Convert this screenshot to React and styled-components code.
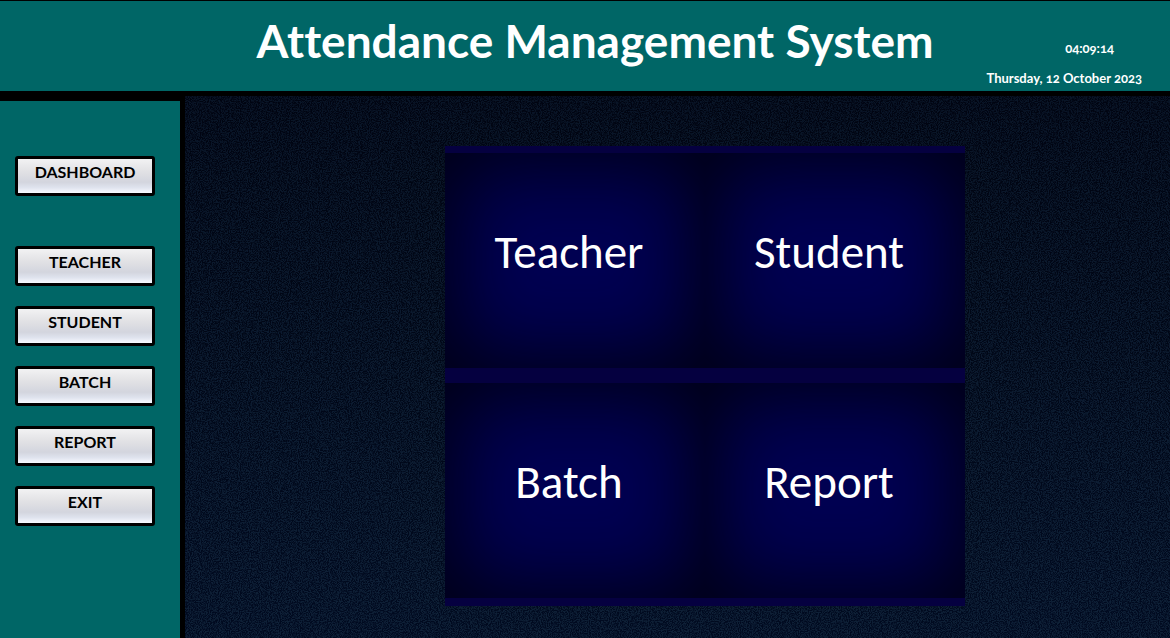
import React from "react";
import styled, { createGlobalStyle } from "styled-components";

const GlobalStyle = createGlobalStyle`
  * { box-sizing: border-box; }
  body {
    margin: 0;
    background: #000;
    font-family: Candara, Lato, "Open Sans", sans-serif;
    font-variant-ligatures: none;
  }
`;

const Page = styled.div`
  min-height: 100vh;
  display: flex;
  flex-direction: column;
`;

const Header = styled.header`
  display: grid;
  grid-template-columns: 1fr auto 1fr;
  min-height: 96px;
  padding: 0 28px 0 48px;
  background: #006666;
  border-top: 1px solid #000;
  border-bottom: 5px solid #000;
  color: #fff;
`;

const Title = styled.h1`
  grid-column: 2;
  margin: 0;
  padding-top: 13px;
  font-size: 46px;
  line-height: 54px;
  font-weight: 700;
  white-space: nowrap;
`;

const Clock = styled.div`
  display: flex;
  flex-direction: column;
  align-items: flex-end;
  gap: 14px;
  padding-top: 39px;
  font-size: 13px;
  line-height: 16px;
  font-weight: 700;
  font-variant-numeric: oldstyle-nums;
  white-space: nowrap;
`;

const Time = styled.time`
  padding-right: ${(p) => (p.$inset ? "28px" : "0")};
`;

const Body = styled.div`
  flex: 1;
  display: flex;
`;

const Sidebar = styled.nav`
  flex: none;
  width: 185px;
  display: flex;
  flex-direction: column;
  gap: 20px;
  padding: 55px 25px 20px 15px;
  background: #006666;
  border-top: 5px solid #000;
  border-right: 5px solid #000;
`;

const NavButton = styled.button`
  height: 40px;
  margin: 0 0 ${(p) => (p.$spaced ? "30px" : "0")};
  padding: 0 0 8px;
  border: 3px solid #000;
  border-radius: 3px;
  background: linear-gradient(#f2f2f3 0%, #e2e2e5 35%, #d3d5de 68%, #dfe3ee 84%, #f8faff 100%);
  color: #000;
  font-family: inherit;
  font-size: 16px;
  line-height: 20px;
  font-weight: 700;
  cursor: pointer;
`;

const Main = styled.main`
  position: relative;
  flex: 1;
  display: flex;
  justify-content: center;
  align-items: flex-start;
  padding: 50px 0 32px 55px;
  background: linear-gradient(#000411, #000717 50%, #000a20);
`;

const Grain = styled.svg`
  position: absolute;
  inset: 0;
  width: 100%;
  height: 100%;
`;

const Tiles = styled.div`
  position: relative;
  display: grid;
  grid-template-columns: repeat(2, 260px);
`;

const Tile = styled.button`
  height: 230px;
  margin: 0;
  padding: 0 12px 18px 0;
  border: 0 solid #050040;
  border-width: 7px 0 8px;
  background: #000052;
  box-shadow: inset 0 0 80px 12px #000014;
  color: #fff;
  font-family: Calibri, Lato, sans-serif;
  font-size: 47px;
  line-height: 52px;
  cursor: pointer;
`;

const navItems = ["DASHBOARD", "TEACHER", "STUDENT", "BATCH", "REPORT", "EXIT"];
const tiles = ["Teacher", "Student", "Batch", "Report"];

export default function App() {
  return (
    <Page>
      <GlobalStyle />
      <Header>
        <Title>Attendance Management System</Title>
        <Clock>
          <Time $inset>04:09:14</Time>
          <Time dateTime="2023-10-12">Thursday, 12 October 2023</Time>
        </Clock>
      </Header>
      <Body>
        <Sidebar>
          {navItems.map((item, i) => (
            <NavButton key={item} type="button" $spaced={i === 0}>
              {item}
            </NavButton>
          ))}
        </Sidebar>
        <Main>
          <Grain aria-hidden="true">
            <defs>
              <filter id="grain" x="0" y="0" width="100%" height="100%" colorInterpolationFilters="sRGB">
                <feTurbulence type="fractalNoise" baseFrequency="0.9" numOctaves="2" seed="4" />
                <feColorMatrix
                  values="0 0 0 0 0.07
                          0 0 0 0 0.15
                          0 0 0 0 0.24
                          4 0 0 0 -1.5"
                />
              </filter>
              <linearGradient id="fade" x1="0" y1="0" x2="0" y2="1">
                <stop offset="0" stopColor="#fff" stopOpacity="0.5" />
                <stop offset="1" stopColor="#fff" stopOpacity="0.8" />
              </linearGradient>
              <mask id="depth">
                <rect width="100%" height="100%" fill="url(#fade)" />
              </mask>
            </defs>
            <g mask="url(#depth)">
              <rect width="100%" height="100%" filter="url(#grain)" />
            </g>
          </Grain>
          <Tiles>
            {tiles.map((name) => (
              <Tile key={name} type="button">
                {name}
              </Tile>
            ))}
          </Tiles>
        </Main>
      </Body>
    </Page>
  );
}
